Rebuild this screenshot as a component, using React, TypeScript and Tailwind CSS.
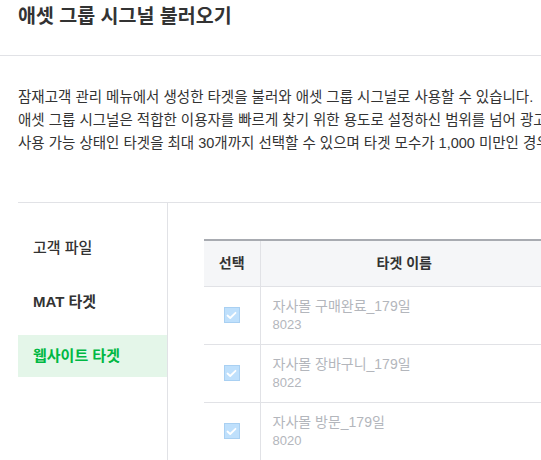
import React from "react";

const rows = [
  { name: "자사몰 구매완료_179일", id: "8023" },
  { name: "자사몰 장바구니_179일", id: "8022" },
  { name: "자사몰 방문_179일", id: "8020" },
];

function Check() {
  return (
    <span className="flex h-4 w-4 items-center justify-center border border-[#a9d0f2] bg-[#bfe0fc]">
      <svg width="11" height="9" viewBox="0 0 11 9" fill="none">
        <path d="M1.5 4.5 L4.2 7 L9.5 1.8" stroke="#ffffff" strokeWidth="1.8" strokeLinecap="round" strokeLinejoin="round" />
      </svg>
    </span>
  );
}

export default function App() {
  return (
    <div
      className="h-[460px] w-[541px] overflow-hidden bg-white text-[#333]"
      style={{ fontFamily: '"Liberation Sans", "Noto Sans CJK KR", sans-serif' }}
    >
      <div className="h-[56px] border-b border-[#e1e2e6] pl-[18px]">
        <h1 className="whitespace-nowrap text-[19.5px] font-bold leading-[33px] text-[#333]">애셋 그룹 시그널 불러오기</h1>
      </div>
      <div className="whitespace-nowrap pl-[18px] pt-[30px] text-[14.5px] leading-[23px] text-[#333]">
        <p>잠재고객 관리 메뉴에서 생성한 타겟을 불러와 애셋 그룹 시그널로 사용할 수 있습니다.</p>
        <p>애셋 그룹 시그널은 적합한 이용자를 빠르게 찾기 위한 용도로 설정하신 범위를 넘어 광고가 노출될 수 있습니다.</p>
        <p>사용 가능 상태인 타겟을 최대 30개까지 선택할 수 있으며 타겟 모수가 1,000 미만인 경우 선택할 수 없습니다.</p>
      </div>
      <div className="ml-[18px] mt-[47px] flex h-[300px] border-t border-[#e1e2e6]">
        <div className="flex w-[150px] shrink-0 flex-col gap-[12px] border-r border-[#e1e2e6] pt-[24px] text-[15px]">
          <div className="flex h-[42px] items-center pl-[15px] font-medium text-[#333]">고객 파일</div>
          <div className="flex h-[42px] items-center pl-[15px] font-bold text-[#333]">MAT 타겟</div>
          <div className="flex h-[42px] items-center bg-[#e4f6e9] pl-[15px] font-bold text-[#00b843]">웹사이트 타겟</div>
        </div>
        <div className="pl-[36px] pt-[36px]">
          <table className="w-[350px] border-collapse text-[14px]">
            <thead>
              <tr className="h-[46px] border-t-2 border-[#a8abb1] bg-[#f5f6f8]">
                <th className="w-[56px] border-b border-r border-[#e1e2e6] text-center font-bold text-[#333]">선택</th>
                <th className="border-b border-[#e1e2e6] pr-[6px] text-center font-bold text-[#333]">타겟 이름</th>
              </tr>
            </thead>
            <tbody>
              {rows.map((r) => (
                <tr key={r.id} className="h-[58px] border-b border-[#e1e2e6]">
                  <td className="border-r border-[#e1e2e6]">
                    <div className="flex justify-center">
                      <Check />
                    </div>
                  </td>
                  <td className="pl-[12px] align-middle text-[#b3b6bc]">
                    <div className="whitespace-nowrap text-[14px] leading-[20px]">{r.name}</div>
                    <div className="text-[13px] leading-[18px]">{r.id}</div>
                  </td>
                </tr>
              ))}
            </tbody>
          </table>
        </div>
      </div>
    </div>
  );
}
